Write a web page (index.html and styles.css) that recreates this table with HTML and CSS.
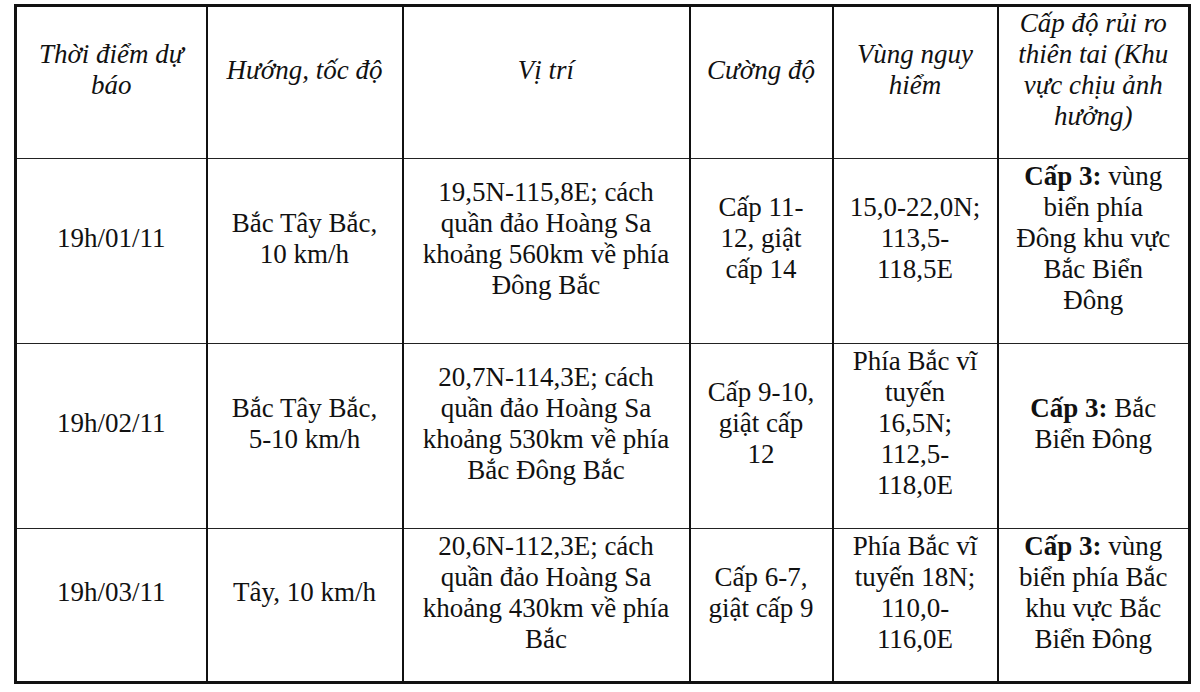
FILE: index.html
```html
<!DOCTYPE html>
<html lang="vi">
<head>
<meta charset="utf-8">
<link rel="stylesheet" href="styles.css">
</head>
<body>
<table class="forecast">
  <colgroup>
    <col class="c1"><col class="c2"><col class="c3"><col class="c4"><col class="c5"><col class="c6">
  </colgroup>
  <tr class="head">
    <th>Thời điểm dự<br>báo</th>
    <th>Hướng, tốc độ</th>
    <th>Vị trí</th>
    <th>Cường độ</th>
    <th>Vùng nguy<br>hiểm</th>
    <th>Cấp độ rủi ro<br>thiên tai (Khu<br>vực chịu ảnh<br>hưởng)</th>
  </tr>
  <tr class="r1">
    <td>19h/01/11</td>
    <td>Bắc Tây Bắc,<br>10 km/h</td>
    <td>19,5N-115,8E; cách<br>quần đảo Hoàng Sa<br>khoảng 560km về phía<br>Đông Bắc</td>
    <td>Cấp 11-<br>12, giật<br>cấp 14</td>
    <td>15,0-22,0N;<br>113,5-<br>118,5E</td>
    <td><b>Cấp 3:</b> vùng<br>biển phía<br>Đông khu vực<br>Bắc Biển<br>Đông</td>
  </tr>
  <tr class="r2">
    <td>19h/02/11</td>
    <td>Bắc Tây Bắc,<br>5-10 km/h</td>
    <td>20,7N-114,3E; cách<br>quần đảo Hoàng Sa<br>khoảng 530km về phía<br>Bắc Đông Bắc</td>
    <td>Cấp 9-10,<br>giật cấp<br>12</td>
    <td>Phía Bắc vĩ<br>tuyến<br>16,5N;<br>112,5-<br>118,0E</td>
    <td><b>Cấp 3:</b> Bắc<br>Biển Đông</td>
  </tr>
  <tr class="r3">
    <td>19h/03/11</td>
    <td>Tây, 10 km/h</td>
    <td>20,6N-112,3E; cách<br>quần đảo Hoàng Sa<br>khoảng 430km về phía<br>Bắc</td>
    <td>Cấp 6-7,<br>giật cấp 9</td>
    <td>Phía Bắc vĩ<br>tuyến 18N;<br>110,0-<br>116,0E</td>
    <td><b>Cấp 3:</b> vùng<br>biển phía Bắc<br>khu vực Bắc<br>Biển Đông</td>
  </tr>
</table>
</body>
</html>
```

FILE: styles.css
```css
html, body {
  margin: 0;
  padding: 0;
  background: #ffffff;
}

body {
  width: 1200px;
  height: 692px;
  overflow: hidden;
}

.forecast {
  margin: 4px 0 0 14px;
  border-collapse: collapse;
  table-layout: fixed;
  width: 1174px;
  border: 3px solid #111;
  font-family: "Liberation Serif", "Times New Roman", serif;
  font-size: 27px;
  line-height: 31px;
  color: #111;
}

.c1 { width: 191px; }
.c2 { width: 196px; }
.c3 { width: 287px; }
.c4 { width: 143px; }
.c5 { width: 165px; }
.c6 { width: 192px; }

.forecast th,
.forecast td {
  border-left: 2px solid #111;
  border-right: 2px solid #111;
  border-top: 1.5px solid #222;
  border-bottom: 1.5px solid #222;
  padding: 0 2px 25px;
  text-align: center;
  vertical-align: middle;
  overflow: visible;
  white-space: nowrap;
}

.forecast th {
  font-style: italic;
  font-weight: normal;
}

.forecast b {
  font-weight: bold;
}

.head { height: 153px; }
.r1 { height: 185px; }
.r2 { height: 185px; }
.r3 { height: 154px; }
```
